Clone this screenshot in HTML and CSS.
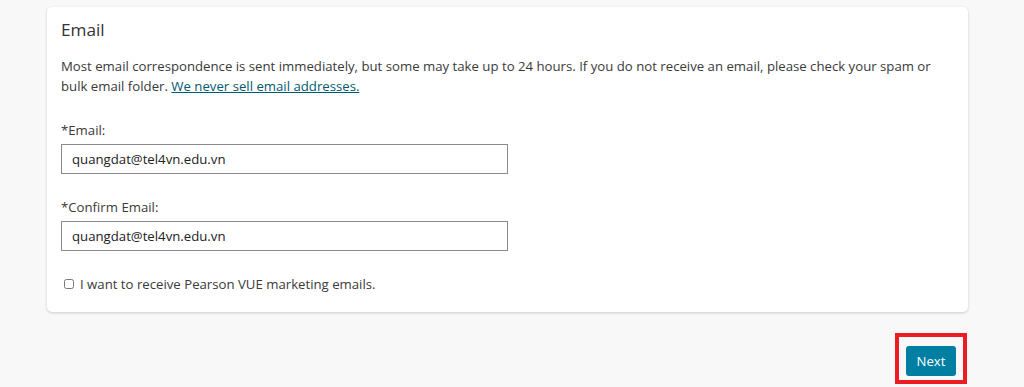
FILE: index.html
```html
<!DOCTYPE html>
<html lang="en">
<head>
    <meta charset="UTF-8">
    <meta name="viewport" content="width=device-width, initial-scale=1.0">
    <title>Email</title>
    <link rel="stylesheet" href="styles.css">
</head>
<body>
    <div class="page">
        <div class="card">
            <h2>Email</h2>
            <p class="note">Most email correspondence is sent immediately, but some may take up to 24 hours. If you do not receive an email, please check your spam or bulk email folder. <a href="#">We never sell email addresses.</a></p>

            <div class="field">
                <label for="email">*Email:</label>
                <input type="text" id="email" value="quangdat@tel4vn.edu.vn">
            </div>

            <div class="field">
                <label for="confirm-email">*Confirm Email:</label>
                <input type="text" id="confirm-email" value="quangdat@tel4vn.edu.vn">
            </div>

            <div class="check-row">
                <input type="checkbox" id="marketing">
                <label for="marketing">I want to receive Pearson VUE marketing emails.</label>
            </div>
        </div>

        <div class="actions">
            <div class="highlight">
                <button class="next-btn">Next</button>
            </div>
        </div>
    </div>
</body>
</html>
```

FILE: styles.css
```css
* {
    margin: 0;
    padding: 0;
    box-sizing: border-box;
    font-family: 'Open Sans', 'Noto Sans', sans-serif;
}

body {
    background: #f8f8f8;
    color: #3a3a3a;
    font-size: 13.2px;
    line-height: 20px;
}

.page {
    width: 921px;
    margin-left: 47px;
    padding-top: 7px;
}

.card {
    background: white;
    border-radius: 5px;
    box-shadow: 0 1px 3px rgba(0,0,0,0.18);
    padding: 11px 14px 18px;
}

h2 {
    font-size: 17.2px;
    font-weight: 400;
    line-height: 24px;
    color: #333;
    margin-bottom: 14px;
}

.note {
    margin-bottom: 24px;
}

.note a {
    color: #005a70;
    text-decoration: underline;
}

.field {
    margin-bottom: 23px;
}

.field label {
    display: block;
    margin-bottom: 4px;
}

.field input {
    display: block;
    width: 447px;
    height: 30px;
    padding: 0 10px;
    border: 1px solid #8a8a8a;
    font-size: 13.2px;
    color: #222;
    background: white;
}

.check-row {
    display: flex;
    align-items: center;
    gap: 6px;
    padding-left: 3px;
    margin-top: 12px;
}

.check-row input {
    width: 10px;
    height: 10px;
    margin: 0;
}

.actions {
    display: flex;
    justify-content: flex-end;
    padding-top: 21px;
}

.highlight {
    border: 4px solid #ec1c24;
    padding: 9px 7px 4px 7px;
    margin-right: 1px;
}

.next-btn {
    display: block;
    width: 50px;
    height: 30px;
    background: #007fa3;
    color: white;
    border: none;
    border-radius: 3px;
    font-size: 13.2px;
    cursor: pointer;
}
```
